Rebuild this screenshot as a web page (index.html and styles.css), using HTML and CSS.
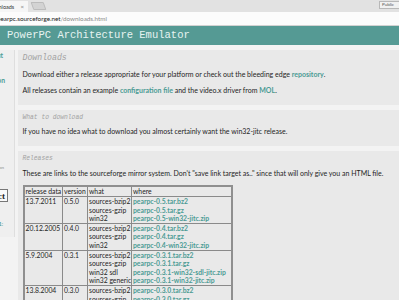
FILE: index.html
```html
<!DOCTYPE html>
<html lang="en">
<head>
  <meta charset="UTF-8">
  <title>Downloads - PearPC</title>
  <link rel="stylesheet" href="styles.css">
</head>
<body>
  <div class="tabstrip">
    <div class="tab"><span class="tab-title">Downloads</span><span class="tab-close">&times;</span></div>
    <div class="newtab"></div>
    <div class="profile">Public</div>
  </div>
  <div class="toolbar">
    <div class="omnibox"><span class="host">pearpc.sourceforge.net</span><span class="path">/downloads.html</span></div>
  </div>

  <header class="banner">PowerPC Architecture Emulator</header>

  <div class="page">
    <nav class="side">
      <a class="side-link first">About</a>
      <a class="side-link">Documentation</a>
      <span class="side-note">Hosted by SourceForge, a division of VA Software Corporation</span>
      <span class="side-badge">SourceForge project</span>
      <a class="side-link small">Valid HTML 4.01:</a>
    </nav>

    <main class="main">
      <section class="box">
        <h2>Downloads</h2>
        <p>Download either a release appropriate for your platform or check out the bleeding edge <a href="#">repository</a>.</p>
        <p>All releases contain an example <a href="#">configuration file</a> and the video.x driver from <a href="#">MOL</a>.</p>
      </section>

      <section class="box">
        <h3>What to download</h3>
        <p>If you have no idea what to download you almost certainly want the win32-jitc release.</p>
      </section>

      <section class="box">
        <h3>Releases</h3>
        <p>These are links to the sourceforge mirror system. Don't "save link target as.." since that will only give you an HTML file.</p>
        <table class="releases">
          <colgroup>
            <col class="c-date"><col class="c-ver"><col class="c-what"><col class="c-where">
          </colgroup>
          <tr><th>release data</th><th>version</th><th>what</th><th>where</th></tr>
          <tr>
            <td>13.7.2011</td><td>0.5.0</td>
            <td>sources-bzip2<br>sources-gzip<br>win32</td>
            <td><a href="#">pearpc-0.5.tar.bz2</a><br><a href="#">pearpc-0.5.tar.gz</a><br><a href="#">pearpc-0.5-win32-jitc.zip</a></td>
          </tr>
          <tr>
            <td>20.12.2005</td><td>0.4.0</td>
            <td>sources-bzip2<br>sources-gzip<br>win32</td>
            <td><a href="#">pearpc-0.4.tar.bz2</a><br><a href="#">pearpc-0.4.tar.gz</a><br><a href="#">pearpc-0.4-win32-jitc.zip</a></td>
          </tr>
          <tr>
            <td>5.9.2004</td><td>0.3.1</td>
            <td>sources-bzip2<br>sources-gzip<br>win32 sdl<br>win32 generic</td>
            <td><a href="#">pearpc-0.3.1.tar.bz2</a><br><a href="#">pearpc-0.3.1.tar.gz</a><br><a href="#">pearpc-0.3.1-win32-sdl-jitc.zip</a><br><a href="#">pearpc-0.3.1-win32-jitc.zip</a></td>
          </tr>
          <tr>
            <td>13.8.2004</td><td>0.3.0</td>
            <td>sources-bzip2<br>sources-gzip</td>
            <td><a href="#">pearpc-0.3.0.tar.bz2</a><br><a href="#">pearpc-0.3.0.tar.gz</a></td>
          </tr>
        </table>
      </section>
    </main>
  </div>
</body>
</html>
```

FILE: styles.css
```css
html, body {
  margin: 0;
  padding: 0;
  height: 300px;
  overflow: hidden;
  background-color: #f3f3f3;
  font-family: Lato, 'Open Sans', sans-serif;
  color: #1e1e1e;
}

/* browser chrome */
.tabstrip {
  display: flex;
  align-items: flex-end;
  height: 12px;
  background-color: #e2e2e2;
}

.tab {
  display: flex;
  align-items: center;
  width: 28px;
  height: 11px;
  background-color: #f6f6f6;
  overflow: hidden;
  font-size: 5.5px;
  color: #333;
  white-space: nowrap;
}

.tab-title {
  margin-left: -13px;
}

.tab-close {
  margin-left: auto;
  margin-right: 4px;
  font-size: 6px;
  color: #777;
}

.newtab {
  width: 11px;
  height: 6px;
  margin: 0 0 2px 4px;
  background-color: #d3d3d3;
  border: 1px solid #bcbcbc;
  border-radius: 1px;
  transform: skewX(20deg);
}

.profile {
  align-self: flex-start;
  margin: 1px -8px 0 auto;
  width: 22px;
  height: 6px;
  padding: 0 2px;
  border: 1px solid #b8b8b8;
  background-color: #f1f1f1;
  font-size: 4.5px;
  line-height: 6px;
  color: #555;
}

.toolbar {
  display: flex;
  align-items: center;
  height: 13px;
  background-color: #fcfcfc;
  border-bottom: 1px solid #d2d2d2;
}

.omnibox {
  margin-left: -3px;
  font-size: 6.3px;
  white-space: nowrap;
}

.host {
  color: #222;
}

.path {
  color: #8a8a8a;
}

/* page */
.banner {
  height: 19px;
  line-height: 19px;
  padding-left: 7px;
  background-color: #559a94;
  color: #e6f3f1;
  font-family: 'Liberation Mono', monospace;
  font-size: 10.5px;
  white-space: nowrap;
}

.page {
  display: flex;
  align-items: flex-start;
  gap: 3px;
  padding-top: 5px;
}

.side {
  display: flex;
  flex-direction: column;
  align-items: flex-end;
  flex: 0 0 14px;
  height: 187px;
  background-color: #efefef;
  border-right: 1px solid #dedede;
  overflow: hidden;
  white-space: nowrap;
  font-size: 6.8px;
  line-height: 9px;
}

.side-link {
  color: #4b9b94;
  font-weight: bold;
  padding-right: 9px;
}

.side-link.first {
  margin-top: 1px;
  padding-right: 11px;
}

.side-link + .side-link {
  margin-top: 16px;
}

.side-note {
  margin-top: 78px;
  padding-right: 10px;
  font-size: 4.5px;
  color: #8d8d8d;
}

.side-badge {
  margin-top: 17px;
  padding: 1px 2px 0;
  border: 1px solid #777;
  background-color: #f9f9f9;
  font-family: 'Liberation Serif', serif;
  font-weight: bold;
  font-size: 9px;
  line-height: 10px;
  color: #222;
  margin-right: 6px;
}

.side-link.small {
  margin-top: 19px;
  font-size: 5px;
  line-height: 6px;
  padding-right: 11px;
}

.main {
  display: flex;
  flex-direction: column;
  gap: 5px;
  flex: 0 0 400px;
}

.box {
  background-color: #e9e9e9;
  padding: 3px 5px 3px 4.5px;
}

h2, h3 {
  margin: 0;
  line-height: 10px;
  font-family: 'Liberation Mono', monospace;
  font-style: italic;
  font-weight: normal;
  color: #a2a2a2;
}

h2 {
  font-size: 8.2px;
  padding-bottom: 2px;
}

h3 {
  font-size: 6.3px;
}

p {
  margin: 4.5px 0 7px;
  font-size: 7px;
  line-height: 9px;
  white-space: nowrap;
}

a {
  color: #4b9b94;
  font-weight: bold;
  text-decoration: none;
}

.releases {
  width: 208px;
  table-layout: fixed;
  border-collapse: collapse;
  border: 2px solid #8f8f8f;
  font-size: 6.8px;
  line-height: 8.3px;
  white-space: nowrap;
}

.releases th,
.releases td {
  border: 1px solid #8a8a8a;
  padding: 0.5px 1px;
  vertical-align: top;
  text-align: left;
  font-weight: normal;
  overflow: hidden;
}

.c-date { width: 39px; }
.c-ver { width: 25px; }
.c-what { width: 44px; }
.c-where { width: 100px; }
```
